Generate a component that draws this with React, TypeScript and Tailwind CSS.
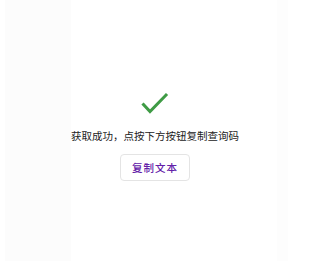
import React from "react";

export default function App() {
  return (
    <div
      className="grid h-[261px] w-[288px] overflow-hidden bg-white"
      style={{ fontFamily: '"Noto Sans CJK SC", "Noto Sans", sans-serif' }}
    >
      <div className="col-start-1 row-start-1 flex h-full w-full">
        <div className="w-[5px] bg-white" />
        <div className="w-[66px] bg-[#fcfcfc]" />
        <div className="flex-1 bg-white" />
        <div className="w-[11px] bg-[#fdfdfd]" />
      </div>
      <div className="col-start-1 row-start-1 flex flex-col items-center pl-[22px] pt-[92px]">
        <svg width="28" height="24" viewBox="0 0 28 24" fill="none">
          <path
            d="M2.5 12.5 L9 19.5 L25 3"
            stroke="#3f9b45"
            strokeWidth="3"
            strokeLinecap="square"
            strokeLinejoin="miter"
          />
        </svg>
        <div className="mt-[13px] text-[10.5px] leading-[14px] text-[#222222]">
          获取成功，点按下方按钮复制查询码
        </div>
        <button className="mt-[11px] flex h-[27px] w-[70px] items-center justify-center rounded-[4px] border border-[#e4e4e4] bg-white text-[10.5px] font-medium tracking-[1px] text-[#6320a8]">
          复制文本
        </button>
      </div>
    </div>
  );
}
